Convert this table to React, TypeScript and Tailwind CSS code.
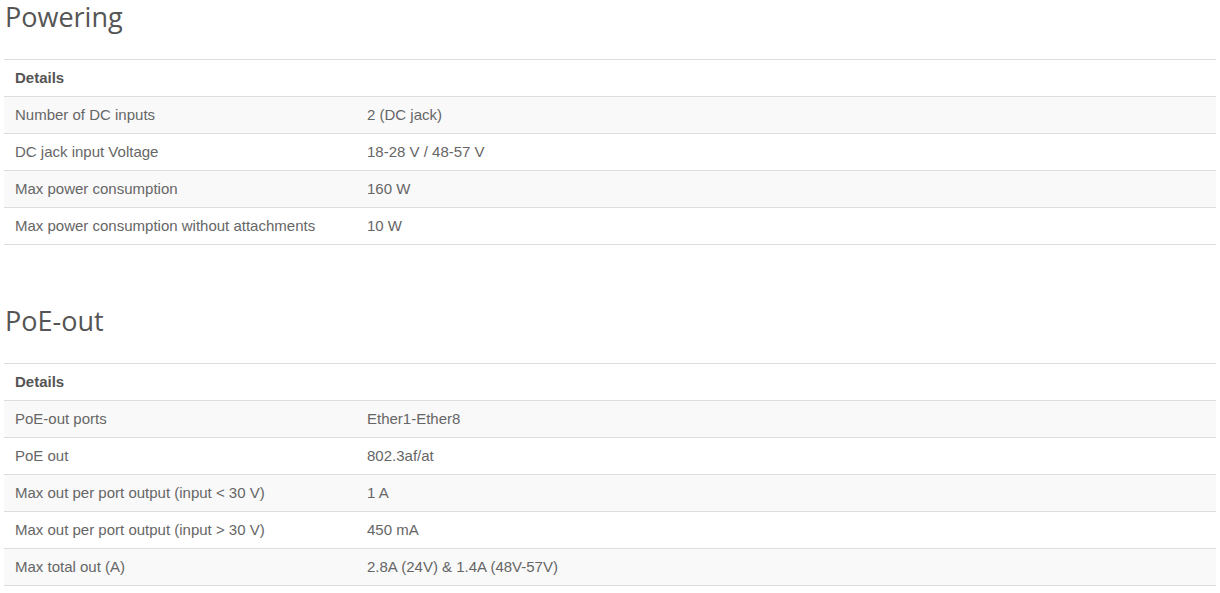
const sections = [
  {
    title: 'Powering',
    rows: [
      ['Number of DC inputs', '2 (DC jack)'],
      ['DC jack input Voltage', '18-28 V / 48-57 V'],
      ['Max power consumption', '160 W'],
      ['Max power consumption without attachments', '10 W'],
    ],
  },
  {
    title: 'PoE-out',
    rows: [
      ['PoE-out ports', 'Ether1-Ether8'],
      ['PoE out', '802.3af/at'],
      ['Max out per port output (input < 30 V)', '1 A'],
      ['Max out per port output (input > 30 V)', '450 mA'],
      ['Max total out (A)', '2.8A (24V) & 1.4A (48V-57V)'],
    ],
  },
]

const SpecTable = ({ title, rows }: { title: string; rows: string[][] }) => {
  return (
    <section className="mb-[59px]">
      {/* Section heading */}
      <h2
        className="text-[27px] leading-[34px] text-[#555] pl-[1px] mb-[25px]"
        style={{ fontFamily: '"Open Sans", sans-serif' }}
      >
        {title}
      </h2>
      <table
        className="w-full border-collapse text-[15px] text-[#666]"
        style={{ fontFamily: '"Liberation Sans", Arial, sans-serif' }}
      >
        <thead>
          <tr className="border-t border-[#ddd] h-[37px]">
            <th colSpan={2} className="text-left font-bold text-[#555] pl-[11px] pr-[10px]">
              Details
            </th>
          </tr>
        </thead>
        <tbody>
          {rows.map(([label, value], i) => (
            <tr
              key={label}
              className={`border-t border-[#ddd] h-[37px] ${i === rows.length - 1 ? 'border-b' : ''} ${i % 2 === 0 ? 'bg-[#f9f9f9]' : 'bg-white'}`}
            >
              <td className="pl-[11px] pr-[10px] w-[353px]">{label}</td>
              <td className="px-[10px]">{value}</td>
            </tr>
          ))}
        </tbody>
      </table>
    </section>
  )
}

const App = () => {
  return (
    <div className="bg-white min-h-screen pl-[4px] pr-[4px]">
      {sections.map((s) => (
        <SpecTable key={s.title} title={s.title} rows={s.rows} />
      ))}
    </div>
  )
}

export default App
